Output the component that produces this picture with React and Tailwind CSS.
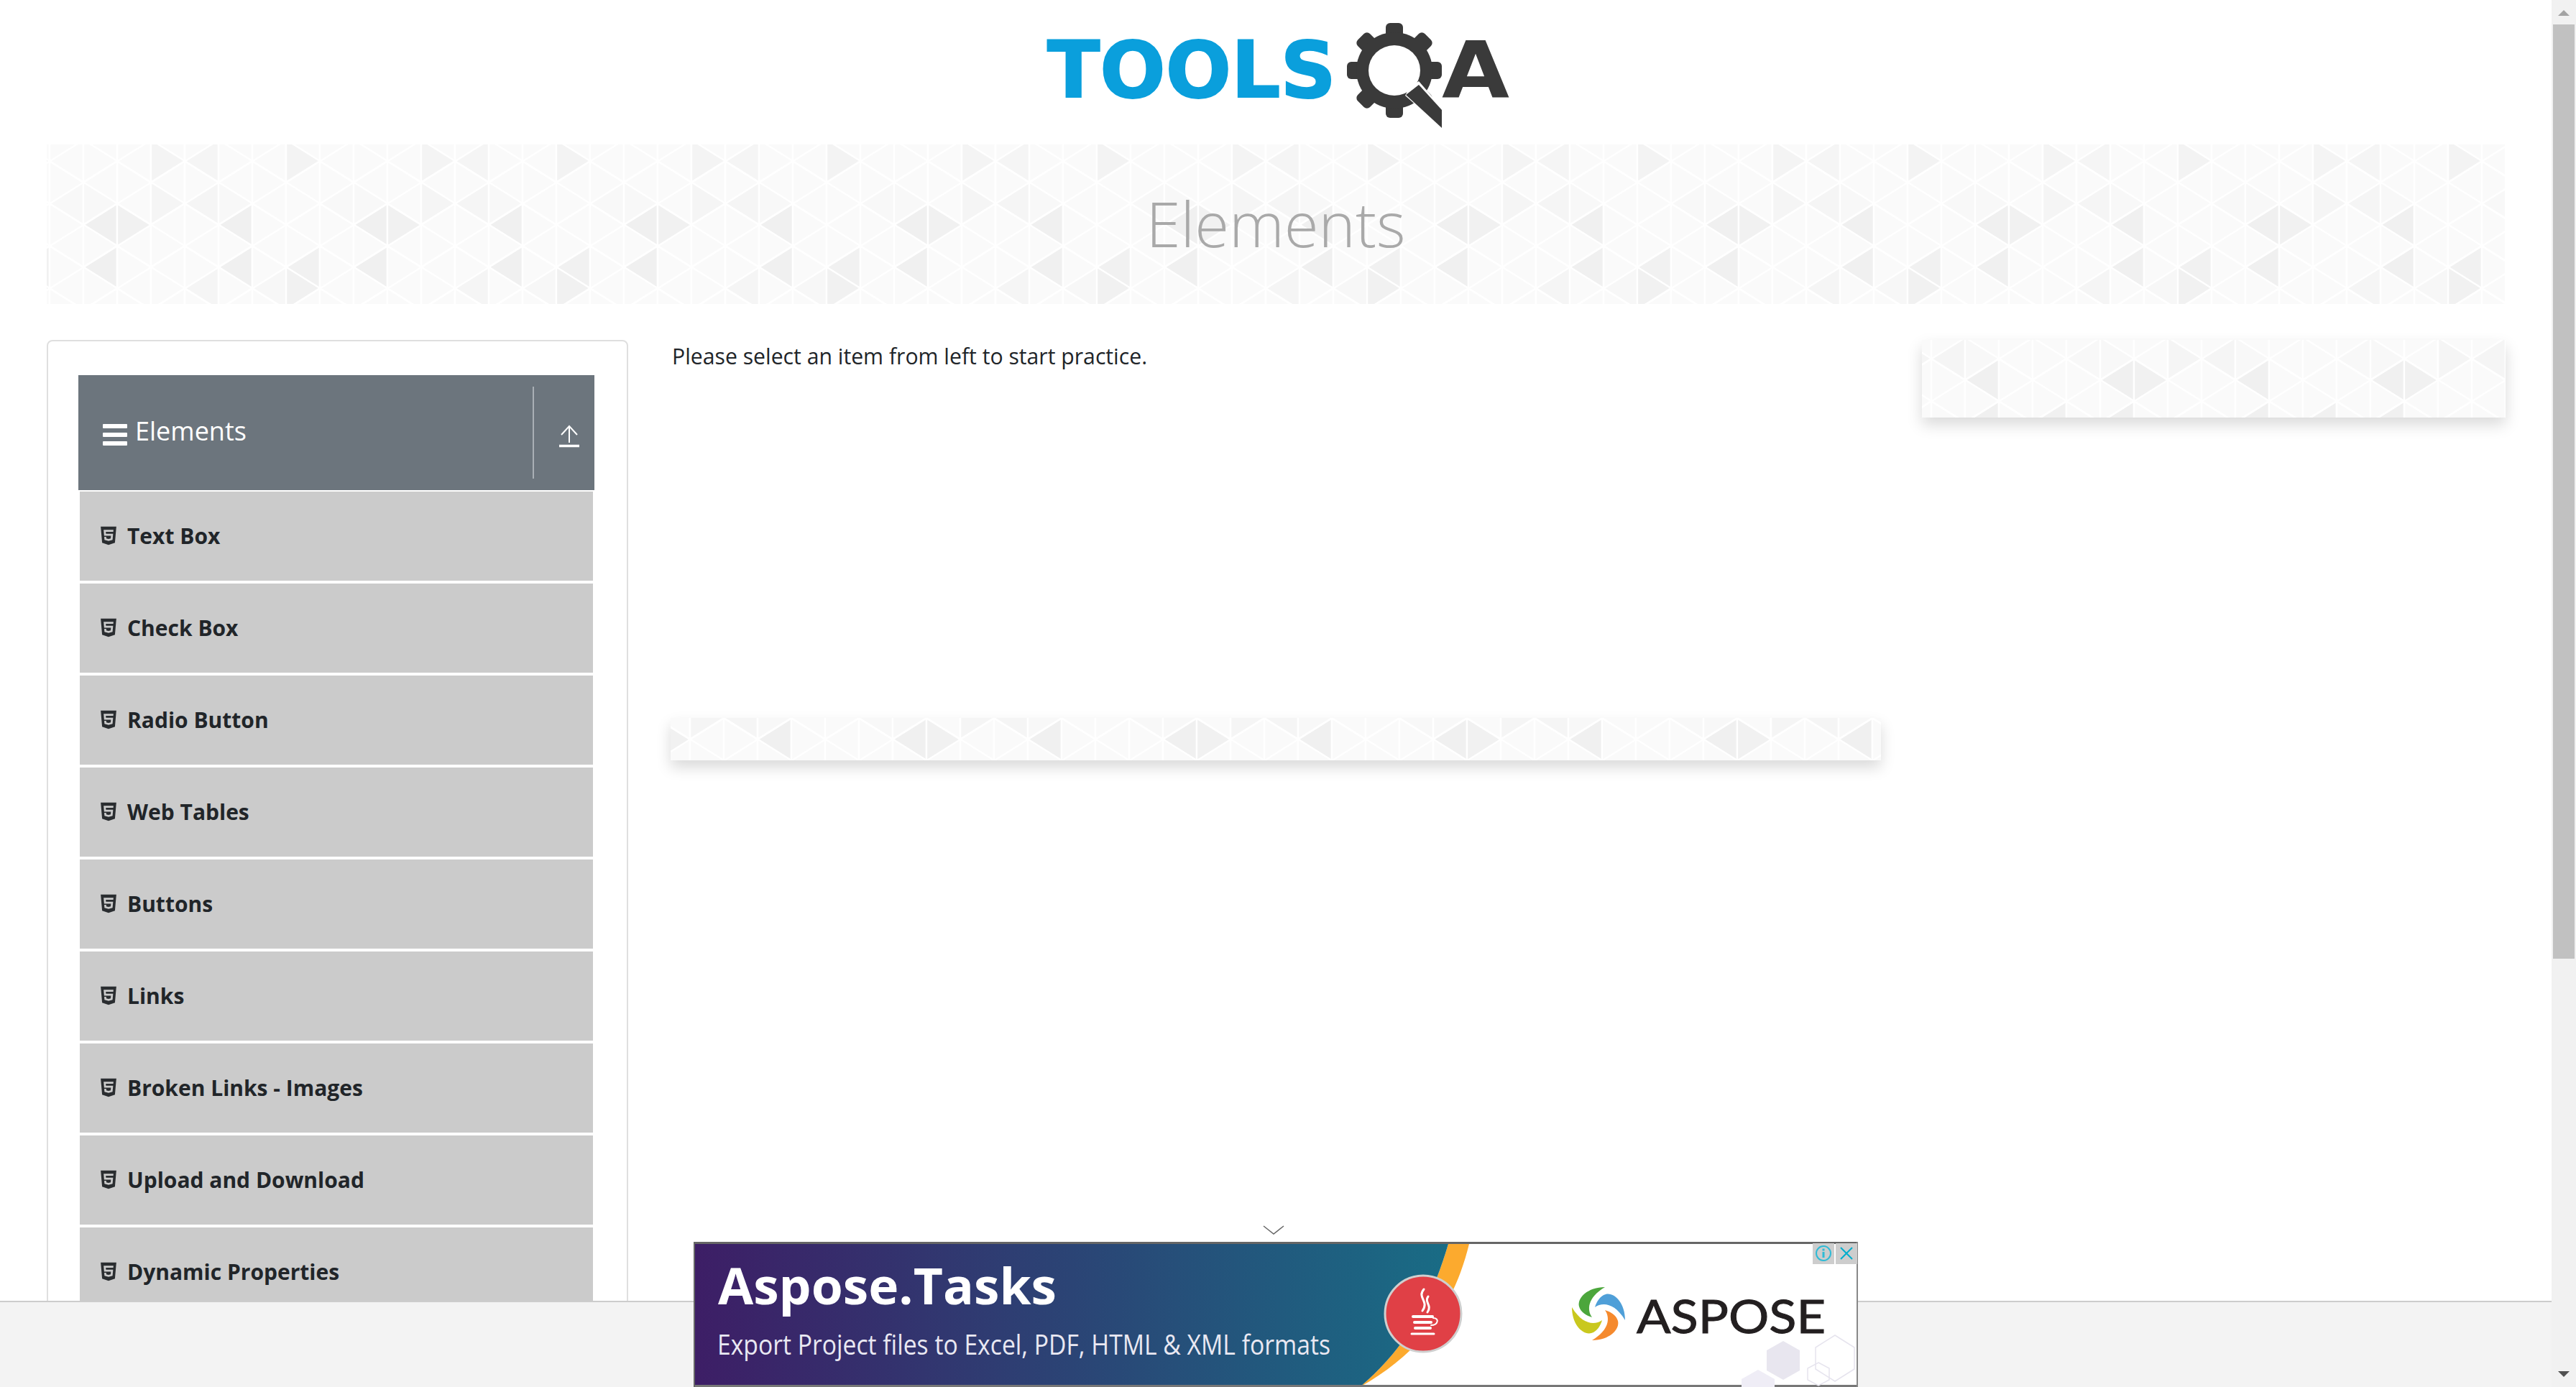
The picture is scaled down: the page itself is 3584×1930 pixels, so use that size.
import React from "react";
import { FaHtml5 } from "react-icons/fa";

const SHADES = {
  "1:112": "#f0f0f0", "2:112": "#f1f1f1", "5:112": "#f0f0f0",
  "1:171": "#f0f0f0", "5:171": "#f0f0f0", "7:171": "#f1f1f1", "7:200": "#f1f1f1",
  "4:200": "#f5f5f5", "6:200": "#f7f7f7",
  "3:82": "#f5f5f5", "4:82": "#f5f5f5", "5:82": "#f8f8f8", "0:82": "#f8f8f8", "1:82": "#f8f8f8",
  "3:23": "#f4f4f4", "4:23": "#f5f5f5", "7:23": "#f3f3f3",
};

function triangles(width, height, tx, ty) {
  const out = [];
  const first = Math.floor((tx - 4) / 47) - 1;
  const last = Math.ceil((tx + width - 4) / 47) + 1;
  const colX = (c) => 4 + 47 * c - tx;
  for (let c = first; c <= last; c++) {
    const m = ((c % 8) + 8) % 8;
    [c, c + 1].forEach((tip) => {
      const other = tip === c ? c + 1 : c;
      const isEven = ((tip % 2) + 2) % 2 === 0;
      const ys = isEven ? [-36, 23, 82, 141, 200, 259] : [-65, -6, 53, 112, 171, 230, 289];
      ys.forEach((y) => {
        const fill = SHADES[`${m}:${y}`] || "#fafafa";
        const yy = y - ty;
        out.push({
          key: `${c}-${tip}-${y}`,
          fill,
          points: `${colX(tip)},${yy} ${colX(other)},${yy - 29.5} ${colX(other)},${yy + 29.5}`,
        });
      });
    });
  }
  return out;
}

function Pattern({ width, height, tx = 0, ty = 0 }) {
  const id = `soft-${width}`;
  return (
    <svg width={width} height={height} viewBox={`0 0 ${width} ${height}`} className="absolute inset-0 block">
      <defs>
        <filter id={id} x="0" y="0" width="100%" height="100%">
          <feGaussianBlur stdDeviation="0.7" />
        </filter>
      </defs>
      <rect width={width} height={height} fill="#fbfbfb" />
      <g filter={`url(#${id})`}>
        {triangles(width, height, tx, ty).map((t) => (
          <polygon key={t.key} points={t.points} fill={t.fill} stroke="#ffffff" strokeWidth="2.4" strokeLinejoin="round" />
        ))}
      </g>
    </svg>
  );
}

function Logo() {
  const teeth = [0, 45, 90, 135, 180, 225, 270, 315];
  return (
    <svg width="660" height="170" viewBox="1445 20 660 170" className="block">
      <text x="1457" y="135" fontFamily="DejaVu Sans" fontWeight="700" fontSize="109" fill="#0a9fdc" stroke="#0a9fdc" strokeWidth="2" textLength="402" lengthAdjust="spacingAndGlyphs">TOOLS</text>
      <g transform="translate(1940 98)" fill="#3a3a3a">
        {teeth.map((a) => (
          <rect key={a} x="-12" y="-66" width="24" height="30" rx="6" transform={`rotate(${a})`} />
        ))}
        <circle r="53" />
        <ellipse rx="36" ry="35" fill="#ffffff" />
      </g>
      <polygon points="1962,120 1974,113 2006,150 2006,178 1955,133" fill="#ffffff" />
      <polygon points="1974,118 2006,153 2006,178 1956,132" fill="#3a3a3a" />
      <text x="2006" y="135" fontFamily="DejaVu Sans" fontWeight="700" fontSize="109" fill="#3a3a3a" textLength="94" lengthAdjust="spacingAndGlyphs">A</text>
    </svg>
  );
}

function AdPicture() {
  const blades = [
    [0, "#4ca63c"],
    [90, "#4f9fd8"],
    [180, "#f58a2e"],
    [270, "#c9c81e"],
  ];
  return (
    <svg width="1620" height="202" viewBox="0 0 1620 202" className="block">
      <defs>
        <linearGradient id="adgrad" x1="0" x2="1" y1="0" y2="0">
          <stop offset="0" stopColor="#3d1e66" />
          <stop offset="0.5" stopColor="#2b4475" />
          <stop offset="1" stopColor="#196c85" />
        </linearGradient>
      </defs>
      <rect width="1620" height="202" fill="#ffffff" />
      <path d="M1050,3 H1079 C1060,80 1020,150 927,202 C1000,140 1030,70 1050,3 Z" fill="#fcaa2e" />
      <path d="M2,3 H1050 C1030,70 1000,140 927,202 H2 Z" fill="url(#adgrad)" />
      <rect width="1620" height="3" fill="#666666" />
      <rect y="199" width="1620" height="3" fill="#777777" />
      <rect width="2" height="202" fill="#666666" />
      <rect x="1618" width="2" height="202" fill="#888888" />
      <text x="34" y="87" fontFamily="Open Sans" fontWeight="700" fontSize="70" fill="#ffffff" textLength="471" lengthAdjust="spacingAndGlyphs">Aspose.Tasks</text>
      <text x="33" y="157" fontFamily="Open Sans" fontSize="39" fill="#e9e8f2" textLength="853" lengthAdjust="spacingAndGlyphs">Export Project files to Excel, PDF, HTML &amp; XML formats</text>
      <circle cx="1015" cy="100" r="53" fill="#e04046" stroke="#cfcfcf" strokeWidth="3" />
      <g fill="none" stroke="#ffffff" strokeWidth="3" strokeLinecap="round">
        <path d="M1016,66 C1006,78 1024,82 1014,96" />
        <path d="M1022,76 C1016,84 1028,88 1021,98" />
        <path d="M1001,104 H1028" strokeWidth="4" />
        <path d="M1003,112 H1026" strokeWidth="4" />
        <path d="M1004,120 H1025" strokeWidth="4" />
        <path d="M999,128 H1030" strokeWidth="3" />
        <path d="M1029,106 C1038,106 1036,116 1026,116" strokeWidth="2" />
      </g>
      <g transform="translate(1259 100)">
        {blades.map(([a, c]) => (
          <path key={a} d="M9,-37 C-15,-37 -30,-22 -27,-10 C-25,-2 -16,3 -9,5 C-16,-5 -16,-22 9,-37 Z" fill={c} transform={`rotate(${a})`} />
        ))}
      </g>
      <text x="1312" y="127" fontFamily="Lato" fontSize="63" fill="#231f20" stroke="#231f20" strokeWidth="1" textLength="263" lengthAdjust="spacingAndGlyphs">ASPOSE</text>
      <polygon points="1516,138 1539,151 1539,179 1516,192 1493,179 1493,151" fill="#e8e6ef" />
      <polygon points="1481,178 1504,191 1504,219 1481,232 1458,219 1458,191" fill="#efedf6" />
      <polygon points="1588,130 1615,147 1615,177 1588,194 1561,177 1561,147" fill="none" stroke="#e6e4ee" strokeWidth="1.5" />
      <polygon points="1565,168 1580,176 1580,192 1565,200 1550,192 1550,176" fill="none" stroke="#e6e4ee" strokeWidth="1.5" />
      <rect x="1557" y="2" width="30" height="29" fill="#cdcdcd" />
      <rect x="1589" y="2" width="30" height="29" fill="#cdcdcd" />
      <circle cx="1572" cy="16" r="10" fill="none" stroke="#2ebbd6" strokeWidth="2" />
      <rect x="1570.5" y="14" width="3" height="8" fill="#2ebbd6" />
      <rect x="1570.5" y="9.5" width="3" height="3" fill="#2ebbd6" />
      <path d="M1596,8 L1612,24 M1612,8 L1596,24" stroke="#00aecd" strokeWidth="2" fill="none" />
    </svg>
  );
}

const ITEMS = ["Text Box", "Check Box", "Radio Button", "Web Tables", "Buttons", "Links", "Broken Links - Images", "Upload and Download", "Dynamic Properties"];

export default function App() {
  return (
    <div className="relative flex h-[1930px] w-[3584px] overflow-hidden bg-white font-['Open_Sans',sans-serif] text-[#212529]">
      <main className="relative h-full w-[3550px]">
        <header className="flex h-[201px] justify-center pt-[20px]">
          <Logo />
        </header>
        <section className="relative mx-[65px] flex h-[222px] items-center justify-center overflow-hidden">
          <Pattern width={3420} height={222} />
          <h1 className="relative -mt-[4px] text-[87px] leading-none font-light text-[#a9a9a9]">Elements</h1>
        </section>
        <div className="mt-[50px] flex pl-[65px]">
          <aside className="h-[1600px] w-[809px] shrink-0 rounded-lg border-2 border-[#dfdfdf] pt-[47px] pr-[45px] pl-[42px]">
            <div className="flex h-[160px] bg-[#6c757d] text-white">
              <div className="flex flex-1 items-center gap-[11px] pl-[34px]">
                <svg width="34" height="32" viewBox="0 0 34 32" className="mt-[6px] block">
                  <rect y="1" width="34" height="6" rx="1" fill="#fff" />
                  <rect y="13" width="34" height="6" rx="1" fill="#fff" />
                  <rect y="25" width="34" height="6" rx="1" fill="#fff" />
                </svg>
                <span className="-mt-[4px] text-[36px] leading-none font-normal">Elements</span>
              </div>
              <div className="my-[16px] w-[2px] bg-[#a9afb5]" />
              <div className="flex w-[84px] items-center justify-center pt-[10px] pl-[14px]">
                <svg width="28" height="32" viewBox="0 0 28 32" fill="none" stroke="#fff" className="block">
                  <path d="M14,25 V2 M3,14 L14,2 L25,14" strokeWidth="2" />
                  <path d="M0,29.5 H28" strokeWidth="3.5" />
                </svg>
              </div>
            </div>
            <ul className="mt-[2px]">
              {ITEMS.map((t) => (
                <li key={t} className="mx-[2px] mb-[4px] flex h-[124px] items-center gap-[15px] bg-[#cbcbcb] pl-[29px]">
                  <FaHtml5 className="-mt-[2px] h-[29px] w-[22px] shrink-0 text-[#2a2d30]" />
                  <span className="text-[30px] leading-none font-bold text-[#212529]">{t}</span>
                </li>
              ))}
            </ul>
          </aside>
          <div className="ml-[59px] w-[1684px] shrink-0">
            <p className="h-[526px] pl-[2px] text-[30.2px] leading-[46px]">Please select an item from left to start practice.</p>
            <div className="relative h-[59px] w-full shadow-[0_10px_20px_rgba(0,0,0,0.15)]">
              <Pattern width={1684} height={59} tx={118} ty={82} />
            </div>
          </div>
          <div className="relative ml-[57px] h-[108px] w-[812px] shrink-0 shadow-[0_10px_20px_rgba(0,0,0,0.15)]">
            <Pattern width={812} height={108} tx={179} ty={56} />
          </div>
        </div>
        <footer className="absolute inset-x-0 bottom-0 h-[120px] border-t-2 border-[#cccccc] bg-[#f3f3f3]" />
        <svg width="30" height="14" viewBox="0 0 30 14" fill="none" className="absolute top-[1705px] left-[1757px] block">
          <path d="M1,1 L15,12 L29,1" stroke="#666" strokeWidth="1.5" />
        </svg>
        <div className="absolute bottom-0 left-[965px]">
          <AdPicture />
        </div>
      </main>
      <div className="flex h-full w-[34px] flex-col items-center bg-[#f1f1f1]">
        <svg width="16" height="8" viewBox="0 0 16 8" className="mt-[14px] block"><polygon points="8,0 16,8 0,8" fill="#a3a3a3" /></svg>
        <div className="mt-[12px] h-[1300px] w-[30px] bg-[#c1c1c1]" />
        <div className="flex-1" />
        <svg width="16" height="8" viewBox="0 0 16 8" className="mb-[14px] block"><polygon points="0,0 16,0 8,8" fill="#505050" /></svg>
      </div>
    </div>
  );
}
